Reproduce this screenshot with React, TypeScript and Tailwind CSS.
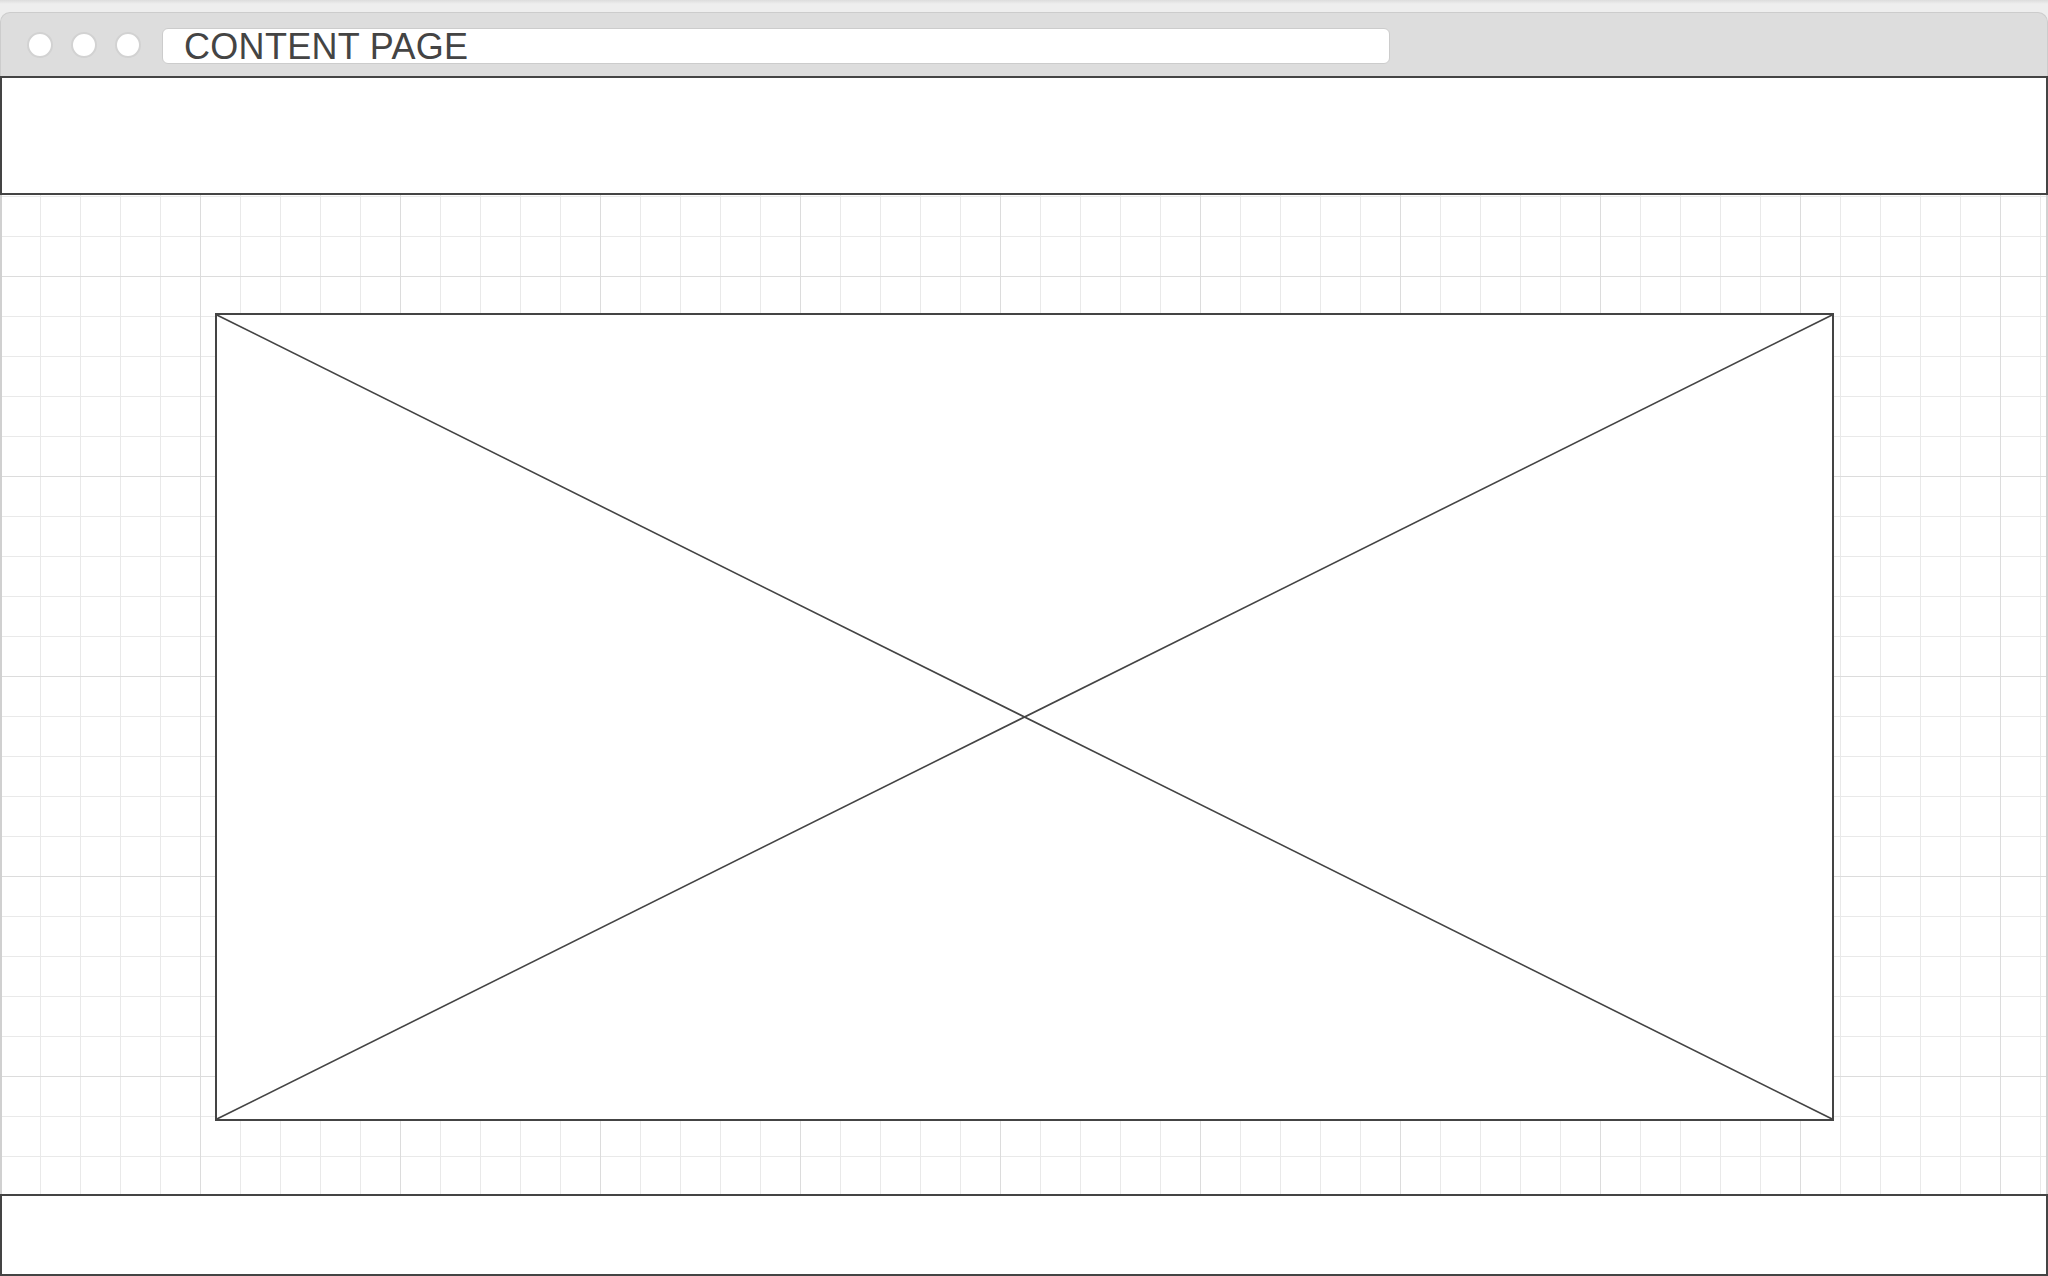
import React from "react";

export default function App() {
  return (
    <div className="w-[2048px] h-[1276px] overflow-hidden bg-[#eeeeee] flex flex-col font-['Liberation_Sans',Arial,sans-serif]">
      {/* top strip */}
      <div className="h-[12px] shrink-0 [background-image:linear-gradient(to_bottom,#dcdcdc,#eeeeee_4px,#eeeeee)]" />
      {/* browser toolbar */}
      <div className="h-[64px] shrink-0 bg-[#dddddd] rounded-t-[10px] border-x border-t border-[#cccccc] flex items-start pl-[26px]">
        <div className="mt-[19px] w-[26px] h-[26px] rounded-full bg-white border-2 border-[#d2d2d2]" />
        <div className="mt-[19px] ml-[18px] w-[26px] h-[26px] rounded-full bg-white border-2 border-[#d2d2d2]" />
        <div className="mt-[19px] ml-[18px] w-[26px] h-[26px] rounded-full bg-white border-2 border-[#d2d2d2]" />
        <div className="mt-[15px] ml-[21px] w-[1228px] h-[36px] rounded-[6px] border border-[#cccccc] bg-white pl-[21px] text-[36px] leading-[35px] tracking-[0.3px] text-[#444444] whitespace-nowrap">
          CONTENT PAGE
        </div>
      </div>
      {/* header */}
      <div className="h-[119px] shrink-0 bg-white border-2 border-[#444444]" />
      {/* grid canvas */}
      <div className="flex-1 bg-white border-x-2 border-[#d0d0d0] [background-origin:border-box] [background-image:linear-gradient(to_right,#dcdcdc_1.5px,transparent_1.5px),linear-gradient(to_bottom,#dcdcdc_1.5px,transparent_1.5px),linear-gradient(to_right,#e9e9e9_1.5px,transparent_1.5px),linear-gradient(to_bottom,#e9e9e9_1.5px,transparent_1.5px)] [background-size:200px_200px,200px_200px,40px_40px,40px_40px] [background-position:0_0,0_81px,0_0,0_1px]">
        <div className="relative ml-[213px] mt-[118px] w-[1619px] h-[808px] bg-white border-2 border-[#444444]">
          <svg className="absolute inset-0 w-full h-full" viewBox="0 0 1615 804" preserveAspectRatio="none">
            <line x1="0" y1="0" x2="1615" y2="804" stroke="#444444" strokeWidth="1.6" />
            <line x1="0" y1="804" x2="1615" y2="0" stroke="#444444" strokeWidth="1.6" />
          </svg>
        </div>
      </div>
      {/* footer */}
      <div className="h-[82px] shrink-0 bg-white border-2 border-[#444444]" />
    </div>
  );
}
